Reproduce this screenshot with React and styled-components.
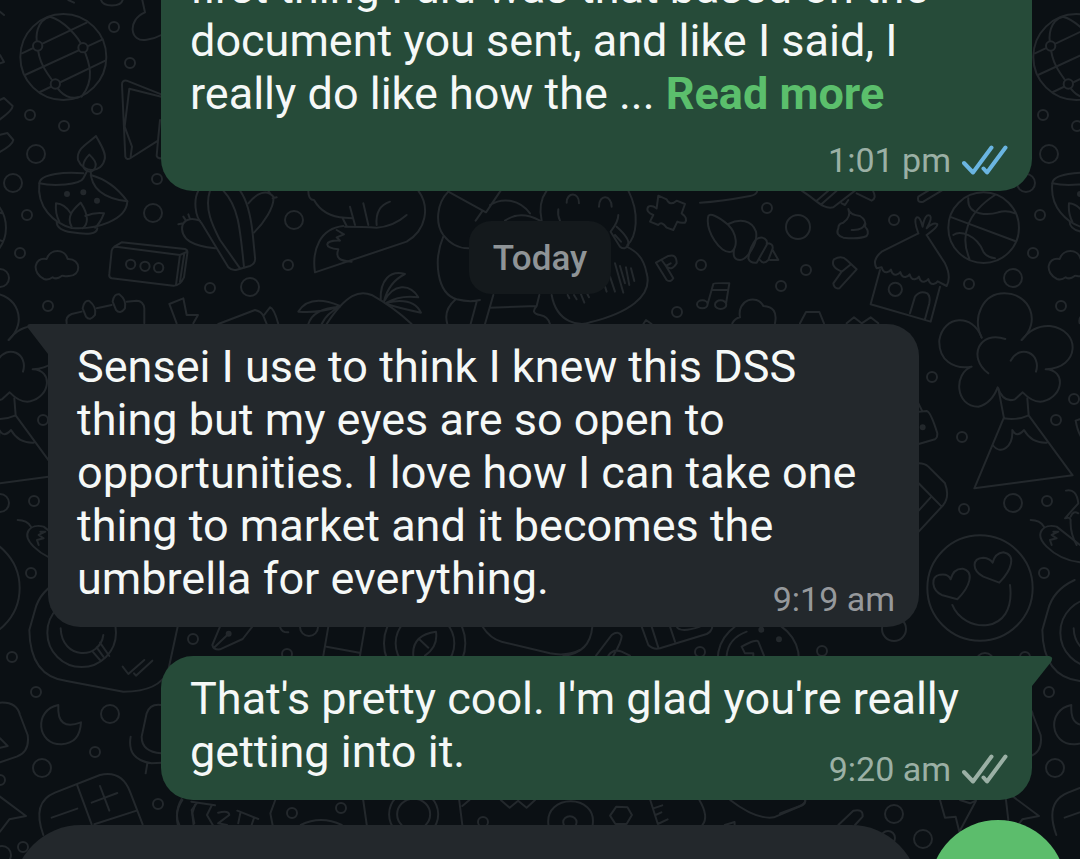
import styled, { createGlobalStyle } from 'styled-components';

// width of one wallpaper tile
const TILE = 1013;

const dots = [
    [114, 27], [130, 63], [30, 115], [97, 109], [64, 126], [27, 215], [157, 179], [20, 253], [48, 306],
    [288, 265], [210, 288], [701, 265], [677, 312], [767, 208], [894, 220], [806, 270], [781, 286],
    [969, 284], [932, 377], [962, 437], [964, 509], [1047, 501], [1056, 420], [1074, 399], [1044, 573],
    [12, 657], [36, 692], [193, 639], [95, 752], [0, 780], [158, 804], [23, 847], [287, 654], [700, 652],
    [822, 651], [292, 813], [341, 808], [483, 822], [36, 154, 9], [13, 183, 9], [153, 213, 9],
    [0, 278, 9], [294, 220, 9], [250, 287, 9], [1013, 503, 9], [110, 714, 9], [42, 768, 9], [2, 855, 9],
    [309, 627, 9], [985, 662, 9], [894, 814, 9], [923, 839, 9], [888, 838, 7], [798, 227, 12], [894, 629, 12],
];

// each sheet is drawn three times larger and scaled down in place
const sheets = [
    {
        at: 'translate(0 0) scale(.3333)',
        lines: [
            'M61 171a129 129 0 1 0 258 0a129 129 0 1 0-258 0',
            'M66 160L260 68M75 225L308 118M120 276L316 182',
            'M150 50C110 60 105 110 113 137C115 190 145 225 165 252C185 290 215 297 235 292',
            'M150 50C190 60 235 110 249 143C270 190 285 240 245 290',
            'M303 0C310 22 362 22 368 0M427 0L435 37C380 60 390 130 440 119Q465 116 484 105M0 35L12 45M0 165L12 186L0 190M205 0L222 8',
            'M-10 305L12 294L38 318Q38 330 0 358M0 404L22 399L40 420Q38 435 0 456',
            'M484 283L380 242Q365 240 366 255L376 470Q380 482 392 474L474 422L470 468Q474 478 486 474M484 290L388 266L374 380L396 440L392 470M480 360L474 422',
            'M288 408C300 430 320 460 314 478C305 520 250 520 234 480C228 445 265 430 288 408Z',
            'M268 464Q290 485 287 497A18 18 0 0 1 250 495Q252 480 268 464Z',
            'M250 520C200 515 120 520 118 550C110 620 160 670 215 684C290 690 380 660 382 604C350 560 310 535 272 525',
            'M118 550C160 560 240 555 250 535L262 512M272 512Q272 590 382 604',
            'M170 665Q170 690 215 697Q290 710 292 685',
            'M178 665Q165 640 168 610Q195 612 212 640M215 680C195 645 230 620 242 608C270 650 262 675 248 685M256 648Q285 636 312 640Q300 670 285 683',
            'M132 837C95 820 100 770 140 777C150 745 195 745 203 777C245 775 245 830 205 828C195 832 190 825 185 828Q170 840 158 832Q145 842 132 837Z',
            'M343 740L365 727L555 747Q564 750 562 760L552 832Q540 858 520 857L335 835Q326 832 328 822L335 752Q338 740 348 740L540 765L562 755M540 765L528 855M553 760L540 845',
            'M378 793a14 14 0 1 0 28 0a14 14 0 1 0-28 0M421 799a14 14 0 1 0 28 0a14 14 0 1 0-28 0M462 803a14 14 0 1 0 28 0a14 14 0 1 0-28 0',
            'M200 970Q195 950 215 942L245 935M290 925L335 915M380 905L410 902Q430 902 433 925V970',
            'M248 925Q252 900 268 903Q290 920 285 945Q270 965 258 950ZM338 905Q342 880 358 883Q380 900 375 925Q360 945 348 930Z',
            'M530 970L508 912L550 895L560 945L594 945L580 970',
        ],
        nodes: [[113, 138], [249, 143], [166, 252]],
        points: [[201, 582], [250, 577], [291, 602]],
    },
    {
        at: 'translate(160 180) scale(.3333)',
        lines: [
            'M115 32C100 60 105 110 125 130L205 262Q215 272 228 270L270 258Q288 250 285 232L278 160Q268 70 240 32',
            'M150 32C130 90 165 150 180 180L240 265M190 32C235 80 240 140 252 262',
            'M120 122C60 100 50 160 90 185Q115 200 165 205M55 133L70 130M70 110L78 122M85 103L90 117',
            'M265 70C290 40 320 25 340 50C345 80 310 130 282 158M338 55L350 52M325 32L330 40',
            'M445 32Q445 60 462 60Q490 110 555 113L578 115M548 115L560 138M570 80L585 135M610 70L625 135M650 135Q645 80 690 65',
            'M555 140Q610 140 650 143Q700 140 740 105',
            'M775 32C810 80 800 150 740 185L465 277C455 210 480 145 550 138',
            'M530 150L552 163L530 172L540 182C490 180 490 205 535 208C525 235 540 243 575 245',
            'M500 432C560 340 600 330 635 345C680 370 720 400 755 432',
            'M415 395Q450 340 540 378Q480 400 415 395M445 432Q460 385 540 380Q500 400 485 432',
            'M662 360C660 300 690 270 735 282C700 300 680 330 672 365C700 310 750 310 775 352Q720 345 680 368Q760 350 783 398Q720 385 680 372',
            'M175 432L285 390Q305 395 310 408L320 432M310 408L330 382Q342 385 355 432',
            'M865 35C830 70 825 130 850 165Q880 205 925 205M850 170C820 240 830 340 890 358Q930 368 960 360M885 360Q850 390 862 432M950 365L932 432',
        ],
    },
    {
        at: 'translate(440 180) scale(.3333)',
        lines: [
            'M25 35L138 97L182 32M128 92L107 122M150 75C190 50 240 60 270 100M195 122Q240 90 300 122',
            'M320 32C300 60 298 90 305 122M565 32C600 100 590 170 562 195M380 68C380 35 418 35 417 70M477 80C477 40 515 45 515 80M355 88Q352 105 360 122',
            'M535 105Q535 125 512 155L540 200Q555 212 565 195Q570 175 530 140M525 165L543 185',
            'M335 345C350 430 420 440 450 427C560 400 640 350 620 280C610 225 580 210 560 200',
            'M525 250L550 338M540 258L555 310M558 262L568 315M573 265L583 303M510 290L525 335M495 320L500 335M383 345L388 355M402 345L410 358M422 340L433 368M442 342L447 352',
            'M160 345L135 432M150 383L290 378L298 345M290 378Q270 400 300 405Q325 410 330 432',
            'M655 47L680 58Q690 80 710 62L735 72L725 100Q745 115 735 128Q720 130 712 125L700 150L680 143Q665 122 655 135L630 125L640 105Q615 95 625 80Q635 75 650 85Z',
            'M648 248L680 300Q692 308 700 295L678 258Q695 275 710 250Q710 220 685 228L648 248M665 240L678 258L692 250',
            'M803 372L820 312Q822 308 868 310L858 372M815 330L865 330M771 373a16 12 0 1 0 32 0a16 12 0 1 0-32 0M825 374a17 13 0 1 0 34 0a17 13 0 1 0-34 0',
            'M610 432L618 420L635 432',
        ],
    },
    {
        at: 'translate(700 180) scale(.3333)',
        lines: [
            'M25 108C30 100 50 105 85 135C110 160 115 200 95 215C60 225 15 150 25 108M85 132C120 115 155 120 168 155C175 190 140 240 120 240Q95 240 103 205',
            'M168 178C190 165 205 180 200 195L170 248Q150 250 145 235Q150 200 168 178M200 190Q220 190 218 205L205 240Q190 255 180 240M218 210L235 240L210 240',
            'M0 68Q60 65 150 48Q170 45 172 32M305 32C350 60 370 90 400 82L465 32M350 62L385 32M365 72L410 32M425 70L435 75L445 60M470 40L515 62Q530 55 520 35M685 32L655 50Q650 70 670 65L725 32',
            'M445 87Q450 105 480 108Q500 120 495 140Q510 155 500 168Q480 178 430 173Q405 165 415 145Q415 130 430 128Q455 110 445 87M455 150Q490 152 495 130',
            'M425 275L400 310Q402 328 418 325L470 268L440 240Q425 225 402 238Q390 260 425 275L450 255',
            'M655 160L545 215Q515 240 530 265L545 262q4 16 15 15q9-2 13-8q4 16 15 15q9-2 13-8q4 16 15 15q9-2 13-8q4 16 15 15q9-2 13-8q4 16 15 15q9-2 13-8q4 16 15 15q9-2 13-8L740 318Q755 290 735 250L680 165',
            'M540 270L512 373L692 425L720 320M630 400L645 350Q660 330 682 340Q692 350 688 370L675 418M566 328a20 20 0 1 0 40 0a20 20 0 1 0-40 0',
            'M655 160Q640 120 650 112Q660 108 668 140Q675 100 690 107Q698 115 680 145Q700 125 712 132Q715 140 680 165',
            'M745 143a106 106 0 1 0 212 0a106 106 0 1 0-212 0M755 112L945 183M885 45C800 100 780 170 808 235M805 55C800 110 870 105 895 97Q920 90 945 100M760 165C780 150 830 165 850 215Q860 232 885 235',
            'M97 430Q105 415 120 412C110 360 170 340 190 378Q235 380 225 430M300 430L318 396L358 396L372 430M440 430L462 412L485 430L512 412L535 430',
        ],
    },
    {
        at: 'translate(900 300) scale(.3333)',
        lines: [
            'M245 113C215 50 250 -20 313 -20C390 -20 425 65 365 120',
            'M245 113C220 40 130 45 118 120C115 180 160 210 215 200C160 220 165 320 235 320Q275 310 293 262Q310 310 345 298L368 277Q400 310 430 304C490 290 500 210 437 208C540 205 545 90 450 78Q400 75 365 120',
            'M316 117C240 90 200 170 265 220M332 182C360 130 425 160 408 215',
            'M295 265L312 355Q350 362 386 346L382 295M312 352L223 565L518 526L386 346M278 435C300 465 340 445 337 390Q350 415 372 390Q395 430 440 428',
            'M50 300L66 332M56 335L80 333Q92 335 112 400Q113 412 105 418L56 432',
            'M56 490Q75 490 85 500L135 550Q150 590 130 615L56 695M56 550L125 620M56 632L92 592',
            'M82 864a158 158 0 1 0 316 0a158 158 0 1 0-316 0M157 915C190 1000 350 1010 330 855',
            'M172 898L125 885C95 870 90 830 120 824Q145 820 152 838Q160 805 188 806C225 815 210 860 172 898Z',
            'M298 848L250 830C215 810 215 775 250 773Q270 775 278 788Q285 760 310 757C350 765 335 810 298 848Z',
            'M392 660Q420 660 432 680M440 740C400 700 430 670 470 680L540 735M440 740Q480 780 540 787M460 695L475 695L455 705L470 715L450 720L455 735',
            'M498 572Q530 565 535 610L495 655Q510 650 512 660Q510 700 530 735M512 650Q520 630 535 640',
            'M527 362Q535 410 560 430M527 362L560 350',
        ],
        points: [[68, 382]],
    },
    {
        at: 'translate(0 610) scale(.3333)',
        lines: [
            'M185 -90Q120 -60 105 0L88 60Q90 200 200 213L370 245Q480 245 505 180L533 50',
            'M142 68a103 103 0 1 0 206 0a103 103 0 1 0-206 0M182 55C185 150 300 150 310 75M278 125L300 150M300 98L328 138M290 112L310 140',
            'M368 170L385 192L433 150M402 190L408 197L457 152',
            'M175 285C100 300 110 405 185 403Q240 400 243 337Q170 365 175 285Z',
            'M0 278Q50 275 60 315L83 375Q90 425 50 440L0 457M0 385L23 408L0 413',
            'M484 285Q450 280 440 310L425 380Q425 425 484 430M392 380Q380 450 455 460L484 458M442 460L437 490',
            'M130 675C110 620 110 570 165 548L300 495Q365 480 390 545L428 643M232 527L275 643M283 643L410 602M155 623L232 596M275 578L352 549M300 528L328 602',
            'M-20 548L0 560L78 618L28 628L0 665M545 567Q525 600 533 643M590 580L575 600L583 640',
        ],
    },
    {
        at: 'translate(180 610) scale(.3333)',
        lines: [
            'M120 50L97 105Q100 120 120 118L188 87L217 50M105 110L145 72M300 50Q305 68 325 67M445 50L430 137M555 50L540 137M440 110L538 128',
            'M612 100a122 122 0 1 0 244 0a122 122 0 1 0-244 0M647 100a88 88 0 1 0 176 0a88 88 0 1 0-176 0',
            'M700 137Q695 75 768 65Q775 110 735 137M718 88L745 113M908 50Q930 85 965 95L1110 130Q1160 140 1200 120',
        ],
        points: [[146, 71]],
    },
    {
        at: 'translate(560 610) scale(.3333)',
        lines: [
            'M97 50Q90 130 10 137M108 137L155 75Q175 60 185 78Q185 95 160 137M145 137Q160 115 185 125L210 137',
            'M245 50L265 105Q280 120 300 115L440 72Q455 65 457 50M275 50L295 113M330 50L345 95M350 50Q360 70 420 50',
            'M473 150a122 122 0 0 1 244 0M500 137Q505 85 560 65M545 110Q590 85 595 95L612 137M545 110L555 130L580 130V140',
        ],
        points: [[604, 59], [657, 88]],
    },
    {
        at: 'translate(780 680) scale(.3333)',
        lines: [
            'M175 435L220 392Q250 385 248 410L225 435M480 360L495 413L527 410L538 455L588 362L570 370L540 360M678 360L685 420M0 400L60 378Q75 370 76 360',
        ],
    },
    {
        at: 'translate(140 780) scale(.4464 .3333)',
        lines: [
            'M95 60Q75 100 88 135M115 65L168 76M125 68L117 100L120 135M160 78L150 105L163 135M175 98Q200 90 200 105L175 130L195 135M218 92L265 117M225 97L220 130M255 115L250 135',
            'M303 60L292 100L297 135M360 135Q405 105 452 135M500 60L508 135',
            'M558 103a55 72 0 1 0 110 0a55 72 0 1 0-110 0M576 103a37 47 0 1 0 74 0a37 47 0 1 0-74 0',
            'M715 60L722 135M722 78L738 60M808 60L828 83L847 62L866 83L885 60M915 135C905 40 1025 40 1014 135M948 127a15 18 0 1 0 30 0a15 18 0 1 0-30 0',
            'M1067 80L1092 82L1102 105L1090 132L1065 132L1053 107ZM1143 60L1160 132L1182 118M1150 85L1170 76M1155 105L1168 97M1253 60Q1275 110 1260 135',
            'M1322 60Q1380 120 1420 112L1485 75Q1492 68 1490 60M1310 135L1332 126V135',
        ],
    },
];

function Wallpaper() {
    return (
        <Doodles aria-hidden='true'>
            <defs>
                <g id='tile'>
                    {dots.map(([x, y, r = 5]) => <circle key={`${x}-${y}`} cx={x} cy={y} r={r} />)}
                    {sheets.map(({ at, lines, nodes = [], points = [] }) => (
                        <g key={at} transform={at}>
                            {lines.map((d) => <path key={d} d={d} />)}
                            {nodes.map(([x, y]) => <circle key={x} cx={x} cy={y} r='14' fill='#0b1014' />)}
                            {points.map(([x, y]) => <circle key={x} cx={x} cy={y} r='6' fill='#23282c' />)}
                        </g>
                    ))}
                </g>
            </defs>
            <use href='#tile' x={-TILE} />
            <use href='#tile' />
            <use href='#tile' x={TILE} />
        </Doodles>
    );
}

function Ticks() {
    return (
        <TickIcon viewBox='0 0 46 30' aria-hidden='true'>
            <path d='M2 18L11 27.5L29.5 2.5M21.5 23.5L25 27.5L43.5 2.5' />
        </TickIcon>
    );
}

export default function App() {
    return (
        <Page>
            <GlobalStyle />
            <Wallpaper />
            <Feed>
                <Bubble $mine>
                    <Text>
                        first thing I did was that based on the document you sent, and like I said, I
                        really do like how the ... <ReadMore href='#more'>Read more</ReadMore>
                    </Text>
                    <Meta $mine $read $ownLine>
                        <time>1:01 pm</time>
                        <Ticks />
                    </Meta>
                </Bubble>

                <DayChip>Today</DayChip>

                <Bubble $tail>
                    <Tail viewBox='0 0 21 32' aria-hidden='true'>
                        <path d='M21 0H3Q-1 0 1 4L21 30Z' />
                    </Tail>
                    <Text>
                        Sensei I use to think I knew this DSS thing but my eyes are so open to
                        opportunities. I love how I can take one thing to market and it becomes the
                        umbrella for everything.
                    </Text>
                    <Meta>
                        <time>9:19 am</time>
                    </Meta>
                </Bubble>

                <Bubble $mine $tail>
                    <Tail $mine viewBox='0 0 21 32' aria-hidden='true'>
                        <path d='M0 0H17Q22 1 19 6L0 30Z' />
                    </Tail>
                    <Text>That's pretty cool. I'm glad you're really getting into it.</Text>
                    <Meta $mine>
                        <time>9:20 am</time>
                        <Ticks />
                    </Meta>
                </Bubble>
            </Feed>
            <Composer>
                <MessageInput type='text' aria-label='Message' />
                <VoiceButton type='button' aria-label='Voice message' />
            </Composer>
        </Page>
    );
}

const GlobalStyle = createGlobalStyle`
    body{
        margin: 0;
        background-color: #0b1014;
        font-family: Roboto, sans-serif;
    }
`;

const Page = styled.main`
    height: 100vh;
    position: relative;
    overflow: hidden;
    display: flex;
    flex-direction: column;
    background-color: #0b1014;
`;

const Doodles = styled.svg`
    width: 100%;
    height: 100%;
    position: absolute;
    inset: 0;
    fill: none;
    stroke: #23282c;
    stroke-width: 2px;
    stroke-linecap: round;
    stroke-linejoin: round;

    path, circle{
        vector-effect: non-scaling-stroke;
    }
`;

const Feed = styled.section`
    flex: 1;
    min-height: 0;
    box-sizing: border-box;
    padding: 0 48px 20px;
    position: relative;
    display: flex;
    flex-direction: column;
    justify-content: flex-end;
    gap: 29px;
`;

const Bubble = styled.article`
    width: calc(100% - 113px);
    flex-shrink: 0;
    box-sizing: border-box;
    padding: 16px 24px 8px 29px;
    position: relative;
    display: grid;
    align-self: ${({ $mine }) => ($mine ? 'flex-end' : 'flex-start')};
    color: #f5f8f7;
    background-color: ${({ $mine }) => ($mine ? '#264b39' : '#23282c')};
    border-radius: 32px;
    ${({ $tail, $mine }) => $tail && `border-top-${$mine ? 'right' : 'left'}-radius: 0;`}
`;

const Tail = styled.svg`
    width: 21px;
    height: 32px;
    position: absolute;
    top: 0;
    ${({ $mine }) => ($mine ? 'left: 100%' : 'right: 100%')};
    fill: ${({ $mine }) => ($mine ? '#264b39' : '#23282c')};
`;

const Text = styled.p`
    grid-area: 1 / 1;
    margin: 0;
    padding-bottom: 14px;
    font-size: 45px;
    line-height: 53px;
`;

const ReadMore = styled.a`
    color: #5bbf6c;
    font-weight: 700;
    text-decoration: none;
`;

const Meta = styled.footer`
    grid-area: ${({ $ownLine }) => ($ownLine ? '2 / 1' : '1 / 1')};
    place-self: end;
    padding-top: ${({ $ownLine }) => ($ownLine ? '6px' : '0')};
    padding-bottom: ${({ $mine }) => ($mine ? '3px' : '0')};
    display: flex;
    align-items: center;
    gap: 11px;
    font-size: 34px;
    line-height: 40px;
    color: ${({ $mine }) => ($mine ? '#9bb0a5' : '#96999c')};

    svg{
        stroke: ${({ $read }) => ($read ? '#6ab5e1' : '#9bb0a5')};
    }
`;

const TickIcon = styled.svg`
    width: 46px;
    height: 30px;
    fill: none;
    stroke-width: 4px;
    stroke-linecap: round;
    stroke-linejoin: round;
`;

const DayChip = styled.div`
    align-self: center;
    box-sizing: border-box;
    margin: 1px 0;
    padding: 17px 24px 15px;
    border-radius: 22px;
    background-color: #14191c;
    color: #8f9497;
    font-size: 35px;
    font-weight: 500;
    line-height: 41px;
`;

const Composer = styled.form`
    height: 39px;
    box-sizing: border-box;
    padding: 0 14px 0 13px;
    position: relative;
    overflow: hidden;
    display: flex;
    align-items: flex-start;
    gap: 11px;
`;

const MessageInput = styled.input`
    flex: 1;
    min-width: 0;
    height: 136px;
    box-sizing: border-box;
    margin: 5px 0 0;
    padding: 0 68px;
    border: none;
    border-radius: 68px;
    background-color: #23282c;
    color: #f5f8f7;
    font-family: inherit;
    font-size: 45px;
`;

const VoiceButton = styled.button`
    width: 136px;
    height: 136px;
    flex-shrink: 0;
    padding: 0;
    border: none;
    border-radius: 50%;
    background-color: #5cbd6c;
`;
